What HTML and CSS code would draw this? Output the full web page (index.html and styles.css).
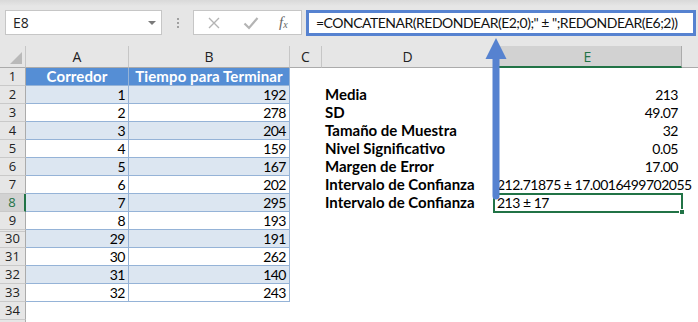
FILE: index.html
```html
<!DOCTYPE html>
<html lang="es">
<head>
<meta charset="utf-8">
<title>CONCATENAR REDONDEAR</title>
<link rel="stylesheet" href="styles.css">
</head>
<body>
<div class="app">
  <div class="toolbar">
    <div class="namebox"><span class="name">E8</span><span class="dropdown"></span></div>
    <div class="grip"><i></i><i></i><i></i></div>
    <div class="fbtns">
      <svg class="ic-x" width="14" height="14" viewBox="0 0 14 14"><path d="M2 2 L12 12 M12 2 L2 12" stroke="#b4b4b4" stroke-width="1.4" fill="none"/></svg>
      <svg class="ic-ok" width="16" height="14" viewBox="0 0 16 14"><path d="M1.5 7.5 L6 12 L14.5 2" stroke="#b4b4b4" stroke-width="2.2" fill="none"/></svg>
      <span class="fx">f<sub>x</sub></span>
    </div>
    <div class="formula">=CONCATENAR(REDONDEAR(E2;0);" ± ";REDONDEAR(E6;2))</div>
  </div>

  <div class="sheet">
    <div class="corner"><span class="tri"></span></div>
    <div class="ch">A</div>
    <div class="ch">B</div>
    <div class="ch">C</div>
    <div class="ch">D</div>
    <div class="ch sel">E</div>
    <div class="ch last"></div>

    <div class="rh">1</div>
    <div class="c th">Corredor</div>
    <div class="c th">Tiempo para Terminar</div>
    <div class="c"></div><div class="c"></div><div class="c"></div><div class="c"></div>

    <div class="rh">2</div>
    <div class="c tb band">1</div><div class="c tb band">192</div>
    <div class="c"></div><div class="c lbl">Media</div><div class="c num">213</div><div class="c"></div>

    <div class="rh">3</div>
    <div class="c tb">2</div><div class="c tb">278</div>
    <div class="c"></div><div class="c lbl">SD</div><div class="c num">49.07</div><div class="c"></div>

    <div class="rh">4</div>
    <div class="c tb band">3</div><div class="c tb band">204</div>
    <div class="c"></div><div class="c lbl">Tamaño de Muestra</div><div class="c num">32</div><div class="c"></div>

    <div class="rh">5</div>
    <div class="c tb">4</div><div class="c tb">159</div>
    <div class="c"></div><div class="c lbl">Nivel Significativo</div><div class="c num">0.05</div><div class="c"></div>

    <div class="rh">6</div>
    <div class="c tb band">5</div><div class="c tb band">167</div>
    <div class="c"></div><div class="c lbl">Margen de Error</div><div class="c num">17.00</div><div class="c"></div>

    <div class="rh">7</div>
    <div class="c tb">6</div><div class="c tb">202</div>
    <div class="c"></div><div class="c lbl">Intervalo de Confianza</div><div class="c txt">212.71875 ± 17.0016499702055</div><div class="c"></div>

    <div class="rh rsel">8</div>
    <div class="c tb band">7</div><div class="c tb band">295</div>
    <div class="c"></div><div class="c lbl">Intervalo de Confianza</div><div class="c txt active">213 ± 17<span class="handle"></span></div><div class="c"></div>

    <div class="rh">9</div>
    <div class="c tb">8</div><div class="c tb">193</div>
    <div class="c"></div><div class="c"></div><div class="c"></div><div class="c"></div>

    <div class="rh hid">30</div>
    <div class="c tb band">29</div><div class="c tb band">191</div>
    <div class="c"></div><div class="c"></div><div class="c"></div><div class="c"></div>

    <div class="rh">31</div>
    <div class="c tb">30</div><div class="c tb">262</div>
    <div class="c"></div><div class="c"></div><div class="c"></div><div class="c"></div>

    <div class="rh">32</div>
    <div class="c tb band">31</div><div class="c tb band">140</div>
    <div class="c"></div><div class="c"></div><div class="c"></div><div class="c"></div>

    <div class="rh">33</div>
    <div class="c tb">32</div><div class="c tb">243</div>
    <div class="c"></div><div class="c"></div><div class="c"></div><div class="c"></div>

    <div class="rh">34</div>
    <div class="c"></div><div class="c"></div><div class="c"></div><div class="c"></div><div class="c"></div><div class="c"></div>

    <div class="rh"></div>
    <div class="c"></div><div class="c"></div><div class="c"></div><div class="c"></div><div class="c"></div><div class="c"></div>
  </div>

  <svg class="arrow" width="22" height="162" viewBox="0 0 22 162">
    <path d="M11 0 L21.5 21 L14.5 21 L14.5 158 Q14.5 161.5 11 161.5 Q7.5 161.5 7.5 158 L7.5 21 L0.5 21 Z" fill="#5682d0"/>
  </svg>
</div>
</body>
</html>
```

FILE: styles.css
```css
* { box-sizing: border-box; }
html, body { margin: 0; padding: 0; }
body {
  width: 698px;
  height: 322px;
  overflow: hidden;
  background: #ffffff;
  font-family: Lato, "Open Sans", sans-serif;
  color: #000;
}
.app { position: relative; width: 698px; height: 322px; overflow: hidden; }

.toolbar {
  height: 46px;
  background: linear-gradient(#d9d9d9 0px, #e6e6e6 6px, #e6e6e6 100%);
  display: flex;
  align-items: flex-start;
  padding: 10px 0 0 5px;
}
.namebox {
  width: 157px;
  height: 25px;
  background: #fff;
  border: 1px solid #c6c6c6;
  display: flex;
  align-items: center;
  justify-content: space-between;
  padding: 0 5px 0 7px;
  font-family: "Open Sans", Lato, sans-serif;
  font-size: 14px;
  color: #222;
}
.dropdown {
  width: 0; height: 0;
  border-left: 4px solid transparent;
  border-right: 4px solid transparent;
  border-top: 4px solid #7a7a7a;
}
.grip {
  width: 31px;
  height: 25px;
  display: flex;
  flex-direction: column;
  align-items: center;
  justify-content: center;
  gap: 2px;
}
.grip i { display: block; width: 2px; height: 2px; background: #a0a0a0; }
.fbtns {
  width: 109px;
  height: 25px;
  background: #fff;
  border: 1px solid #c6c6c6;
  display: flex;
  align-items: center;
  padding-left: 13px;
}
.ic-x { margin-right: 22px; }
.ic-ok { margin-right: 20px; }
.fx {
  font-family: "Liberation Serif", serif;
  font-style: italic;
  font-size: 15px;
  color: #666;
  line-height: 1;
}
.fx sub { font-size: 10px; vertical-align: -1px; }
.formula {
  margin-left: 4px;
  width: 390px;
  height: 26px;
  background: #fff;
  border: 3px solid #5682d0;
  font-family: Lato, "Open Sans", sans-serif;
  font-size: 14px;
  letter-spacing: -0.5px;
  line-height: 20px;
  padding-left: 7px;
  white-space: nowrap;
  color: #111;
}

.sheet {
  display: grid;
  grid-template-columns: 26px 103px 161px 32px 172px 188px 16px;
  grid-template-rows: 22px;
  grid-auto-rows: 18px;
  font-size: 14px;
  letter-spacing: -0.5px;
}
.corner {
  background: #e6e6e6;
  border-right: 1px solid #c6c6c6;
  border-bottom: 1px solid #ababab;
  position: relative;
}
.tri {
  position: absolute;
  right: 3px;
  bottom: 3px;
  width: 0; height: 0;
  border-left: 12px solid transparent;
  border-bottom: 12px solid #b9b9b9;
}
.ch {
  background: #e6e6e6;
  border-right: 1px solid #c6c6c6;
  border-bottom: 1px solid #ababab;
  text-align: center;
  font-family: "Open Sans", Lato, sans-serif;
  font-size: 14px;
  letter-spacing: 0;
  line-height: 21px;
  color: #222;
}
.ch.sel {
  background: #d2d2d2;
  color: #217346;
  border-bottom: 2px solid #217346;
  border-right-color: #ababab;
}
.ch.last { border-right: none; }
.rh {
  background: #e6e6e6;
  border-right: 1px solid #ababab;
  border-bottom: 1px solid #c9c9c9;
  text-align: center;
  font-family: "Open Sans", Lato, sans-serif;
  font-size: 13px;
  letter-spacing: 0;
  line-height: 17px;
  color: #222;
}
.rh.rsel {
  background: #d2d2d2;
  color: #217346;
  border-right: 2px solid #217346;
}
.rh.hid {
  background-image: linear-gradient(to bottom, #e6e6e6 0, #e6e6e6 1px, #c9c9c9 1px, #c9c9c9 2px, #e6e6e6 2px);
}

.c {
  white-space: nowrap;
  line-height: 17px;
  padding: 0 3px;
}
.th {
  background: #558ed5;
  color: #fff;
  font-weight: 700;
  font-size: 15px;
  letter-spacing: 0.1px;
  text-align: center;
  border-right: 1px solid #95b3d7;
  border-bottom: 1px solid #95b3d7;
}
.tb {
  text-align: right;
  border-right: 1px solid #95b3d7;
  border-bottom: 1px solid #95b3d7;
}
.band { background: #dce6f1; }
.lbl { font-weight: 700; font-size: 15px; letter-spacing: 0; }
.num { text-align: right; padding-right: 4px; }
.txt { padding-left: 3px; }
.active {
  position: relative;
  outline: 2px solid #217346;
  outline-offset: -1px;
}
.handle {
  position: absolute;
  right: -3px;
  bottom: -3px;
  width: 6px;
  height: 6px;
  background: #217346;
  border: 1px solid #fff;
}
.arrow {
  position: absolute;
  left: 485px;
  top: 38px;
}
```
